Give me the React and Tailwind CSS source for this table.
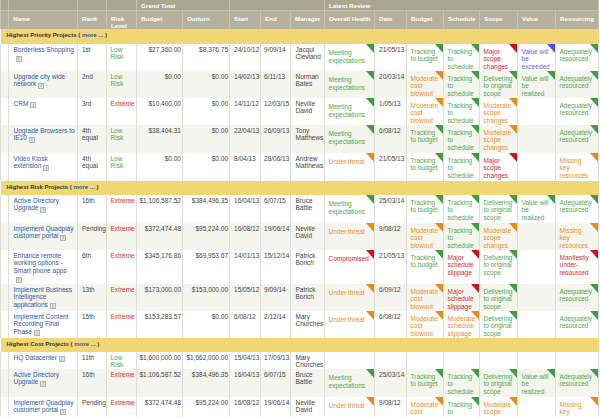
import React from "react";

const MEET = { t: ["Meeting", "expectations"], c: "g" };
const UT = { t: ["Under threat"], c: "o" };
const COMP = { t: ["Compromised"], c: "r" };
const TB = { t: ["Tracking", "to budget"], c: "g" };
const MCB = { t: ["Moderate", "cost", "blowout"], c: "o" };
const TS = { t: ["Tracking", "to", "schedule"], c: "g" };
const MSS = { t: ["Major", "schedule", "slippage"], c: "r" };
const MODSS = { t: ["Moderate", "schedule", "slippage"], c: "o" };
const MSC = { t: ["Major", "scope", "changes"], c: "r" };
const DOS = { t: ["Delivering", "to original", "scope"], c: "g" };
const MODSC = { t: ["Moderate", "scope", "changes"], c: "o" };
const VEX = { t: ["Value will", "be", "exceeded"], c: "b" };
const VR = { t: ["Value will", "be", "realized"], c: "g" };
const ADQ = { t: ["Adequately", "resourced"], c: "g" };
const MKR = { t: ["Missing", "key", "resources"], c: "o" };
const MUR = { t: ["Manifestly", "under-", "resourced"], c: "r" };

const TEXT = {
  g: "text-[#4ea84e]",
  o: "text-[#ee8e1b]",
  r: "text-[#d32a30]",
  b: "text-[#6464ee]",
};
const FILL = { g: "#3f9c3f", o: "#ea8a12", r: "#cc1020", b: "#4d4df5" };

const AD = {
  name: ["Active Directory", "Upgrade"],
  rank: ["16th"],
  risk: "x",
  budget: "$1,106,587.52",
  outturn: "$384,496.35",
  start: "16/04/13",
  end: "6/07/15",
  mgr: ["Bruce", "Battle"],
  health: MEET,
  date: "25/03/14",
  bud: TB,
  sch: TS,
  scope: DOS,
  val: VR,
  res: ADQ,
};
const QP = {
  name: ["Implement Quadplay", "customer portal"],
  rank: ["Pending"],
  risk: "x",
  budget: "$372,474.48",
  outturn: "$95,224.00",
  start: "16/08/12",
  end: "19/06/14",
  mgr: ["Neville", "David"],
  health: UT,
  date: "9/08/12",
  bud: MCB,
  sch: TS,
  scope: MODSC,
  val: null,
  res: MKR,
};

const SECTIONS = [
  {
    title: "Highest Priority Projects",
    h: 15,
    rows: [
      {
        name: ["Borderless Shopping", ""],
        rank: ["1st"],
        risk: "l",
        budget: "$27,360.00",
        outturn: "$8,376.75",
        start: "24/10/12",
        end: "9/09/14",
        mgr: ["Jacqui", "Clevland"],
        health: MEET,
        date: "21/05/13",
        bud: TB,
        sch: TS,
        scope: MSC,
        val: VEX,
        res: ADQ,
        h: 27,
      },
      {
        name: ["Upgrade city wide", "network"],
        rank: ["2nd"],
        risk: "l",
        budget: "$0.00",
        outturn: "$0.00",
        start: "14/02/13",
        end: "6/11/13",
        mgr: ["Norman", "Bates"],
        health: MEET,
        date: "20/03/14",
        bud: MCB,
        sch: TS,
        scope: DOS,
        val: VR,
        res: ADQ,
        h: 27,
        tint: true,
      },
      {
        name: ["CRM"],
        rank: ["3rd"],
        risk: "x",
        budget: "$10,400.00",
        outturn: "$0.00",
        start: "14/11/12",
        end: "12/03/15",
        mgr: ["Neville", "David"],
        health: MEET,
        date: "1/05/13",
        bud: MCB,
        sch: TS,
        scope: MODSC,
        val: null,
        res: ADQ,
        h: 27,
      },
      {
        name: ["Upgrade Browsers to", "IE10"],
        rank: ["4th", "equal"],
        risk: "l",
        budget: "$38,404.31",
        outturn: "$0.00",
        start: "22/04/13",
        end: "26/09/13",
        mgr: ["Tony", "Matthews"],
        health: MEET,
        date: "6/08/12",
        bud: TB,
        sch: TS,
        scope: MODSC,
        val: null,
        res: ADQ,
        h: 28,
        tint: true,
      },
      {
        name: ["Video Kiosk", "extension"],
        rank: ["4th", "equal"],
        risk: "l",
        budget: "$0.00",
        outturn: "$0.00",
        start: "8/04/13",
        end: "28/06/13",
        mgr: ["Andrew", "Matthews"],
        health: UT,
        date: "21/05/13",
        bud: TB,
        sch: TS,
        scope: MSC,
        val: null,
        res: MKR,
        h: 28,
      },
    ],
  },
  {
    title: "Highest Risk Projects",
    h: 14,
    rows: [
      { ...AD, h: 28 },
      { ...QP, h: 27, tint: true },
      {
        name: ["Enhance remote", "working options -", "Smart phone apps", ""],
        rank: ["6th"],
        risk: "x",
        budget: "$345,176.86",
        outturn: "$69,953.67",
        start: "14/01/13",
        end: "15/12/14",
        mgr: ["Patrick", "Borich"],
        health: COMP,
        date: "21/05/13",
        bud: TB,
        sch: MSS,
        scope: DOS,
        val: null,
        res: MUR,
        h: 34,
      },
      {
        name: ["Implement Business", "Intelligence", "applications"],
        rank: ["13th"],
        risk: "x",
        budget: "$173,000.00",
        outturn: "$153,000.00",
        start: "15/05/12",
        end: "9/09/14",
        mgr: ["Patrick", "Borich"],
        health: UT,
        date: "6/09/12",
        bud: MCB,
        sch: MSS,
        scope: DOS,
        val: null,
        res: ADQ,
        h: 27,
        tint: true,
      },
      {
        name: ["Implement Content", "Recording Final", "Phase"],
        rank: ["15th"],
        risk: "x",
        budget: "$153,283.57",
        outturn: "$0.00",
        start: "6/08/12",
        end: "2/12/14",
        mgr: ["Mary", "Churches"],
        health: UT,
        date: "6/08/12",
        bud: MCB,
        sch: MODSS,
        scope: DOS,
        val: null,
        res: ADQ,
        h: 27,
      },
    ],
  },
  {
    title: "Highest Cost Projects",
    h: 14,
    rows: [
      {
        name: ["HQ Datacenter"],
        rank: ["11th"],
        risk: "l",
        budget: "$1,600,000.00",
        outturn: "$1,662,000.00",
        start: "15/04/13",
        end: "17/09/13",
        mgr: ["Mary", "Churches"],
        health: null,
        date: "",
        bud: null,
        sch: null,
        scope: null,
        val: null,
        res: null,
        h: 17,
      },
      { ...AD, h: 28, tint: true },
      { ...QP, h: 28 },
    ],
  },
];

const WIDTHS = [8, 69, 29, 30, 46, 47, 31, 30, 34, 50, 32, 37, 36, 38, 38, 43];

function Info() {
  return (
    <span className="inline-flex items-center justify-center w-[6px] h-[6px] ml-[2px] align-[-1px] border border-[#b4b4b4] bg-[#e4e4e4] text-[5px] leading-none text-[#777]">
      i
    </span>
  );
}

function Lines({ lines }) {
  return lines.map((l, i) => (
    <div key={i} className="whitespace-nowrap">
      {l}
    </div>
  ));
}

const cellBase = "p-0 align-top border-l border-r border-[#dfdfda] overflow-hidden";

function Status({ s, health }) {
  if (!s) return <td className={cellBase} />;
  return (
    <td className={`${cellBase} relative`}>
      <div className={`pl-[3.5px] ${health ? "pt-[5.5px]" : "pt-[4px]"} ${TEXT[s.c]}`}>
        <Lines lines={s.t} />
      </div>
      <svg className="absolute top-0 right-0" width="8" height="9" viewBox="0 0 8 9">
        <polygon points="0,0 8,0 8,9" fill={FILL[s.c]} />
      </svg>
    </td>
  );
}

function Row({ r }) {
  const nameLines = r.name;
  return (
    <tr className={r.tint ? "bg-[#f4f5ed]" : "bg-white"} style={{ height: r.h }}>
      <td className={cellBase} />
      <td className={cellBase}>
        <div className="pl-[4.5px] pt-[2px] text-[#2d58a6]">
          {nameLines.map((l, i) => (
            <div key={i} className="whitespace-nowrap">
              {l}
              {i === nameLines.length - 1 && <Info />}
            </div>
          ))}
        </div>
      </td>
      <td className={cellBase}>
        <div className="pl-[4px] pt-[2px] text-[#444]">
          <Lines lines={r.rank} />
        </div>
      </td>
      <td className={cellBase}>
        <div className={`pl-[3.5px] pt-[2px] ${r.risk === "l" ? TEXT.g : "text-[#de3139]"}`}>
          <Lines lines={r.risk === "l" ? ["Low", "Risk"] : ["Extreme"]} />
        </div>
      </td>
      <td className={cellBase}>
        <div className="pr-[1px] pt-[2px] text-right text-[#444] whitespace-nowrap">{r.budget}</div>
      </td>
      <td className={cellBase}>
        <div className="pr-[1px] pt-[2px] text-right text-[#444] whitespace-nowrap">{r.outturn}</div>
      </td>
      <td className={cellBase}>
        <div className="pl-[4px] pt-[2px] text-[#444] whitespace-nowrap">{r.start}</div>
      </td>
      <td className={cellBase}>
        <div className="pl-[3px] pt-[2px] text-[#444] whitespace-nowrap">{r.end}</div>
      </td>
      <td className={cellBase}>
        <div className="pl-[4.5px] pt-[2px] text-[#444]">
          <Lines lines={r.mgr} />
        </div>
      </td>
      <Status s={r.health} health />
      <td className={cellBase}>
        <div className="pl-[4px] pt-[2.5px] text-[#444] whitespace-nowrap">{r.date}</div>
      </td>
      <Status s={r.bud} />
      <Status s={r.sch} />
      <Status s={r.scope} />
      <Status s={r.val} />
      <Status s={r.res} />
    </tr>
  );
}

function SectionRow({ title, h }) {
  return (
    <tr className="bg-[#f1d674]" style={{ height: h }}>
      <td colSpan={16} className="p-0 align-middle">
        <div className="pl-[6px] text-[6px] font-bold text-[#333] whitespace-nowrap">
          {title} ( <span className="text-[#2d58a6]">more ...</span> )
        </div>
      </td>
    </tr>
  );
}

const hb = "p-0 border-l border-r border-[#c9c5b2]";

export default function App() {
  return (
    <div
      className="w-[600px] h-[417px] overflow-hidden bg-white text-[6.5px] leading-[7.5px]"
      style={{ fontFamily: '"Liberation Sans", Arial, sans-serif' }}
    >
      <table className="table-fixed border-collapse w-[598px]">
        <colgroup>
          {WIDTHS.map((w, i) => (
            <col key={i} style={{ width: w }} />
          ))}
        </colgroup>
        <thead className="text-white font-bold text-[6.2px] leading-[7px]">
          <tr className="bg-[#aaa690] h-[10px]">
            <th className={hb} />
            <th className={hb} />
            <th className={hb} />
            <th className={hb} />
            <th colSpan={2} className={`${hb} text-left align-bottom`}>
              <div className="pl-[4px] pb-[1px]">Grand Total</div>
            </th>
            <th colSpan={3} className={hb} />
            <th colSpan={7} className={`${hb} text-left align-bottom`}>
              <div className="pl-[4px] pb-[1px]">Latest Review</div>
            </th>
          </tr>
          <tr className="bg-[#b5b19c] h-[18px] border-t border-[#c3bfac]">
            {[
              [""],
              ["Name"],
              ["Rank"],
              ["Risk", "Level"],
              ["Budget"],
              ["Outturn"],
              ["Start"],
              ["End"],
              ["Manager"],
              ["Overall Health"],
              ["Date"],
              ["Budget"],
              ["Schedule"],
              ["Scope"],
              ["Value"],
              ["Resourcing"],
            ].map((t, i) => (
              <th key={i} className={`${hb} text-left align-top`}>
                <div className="pl-[4px] pt-[4px] whitespace-nowrap overflow-hidden">
                  {t.map((l, j) => (
                    <div key={j}>{l}</div>
                  ))}
                </div>
              </th>
            ))}
          </tr>
        </thead>
        <tbody>
          {SECTIONS.map((s, si) => (
            <React.Fragment key={si}>
              <SectionRow title={s.title} h={s.h} />
              {s.rows.map((r, ri) => (
                <Row key={ri} r={r} />
              ))}
            </React.Fragment>
          ))}
        </tbody>
      </table>
    </div>
  );
}
